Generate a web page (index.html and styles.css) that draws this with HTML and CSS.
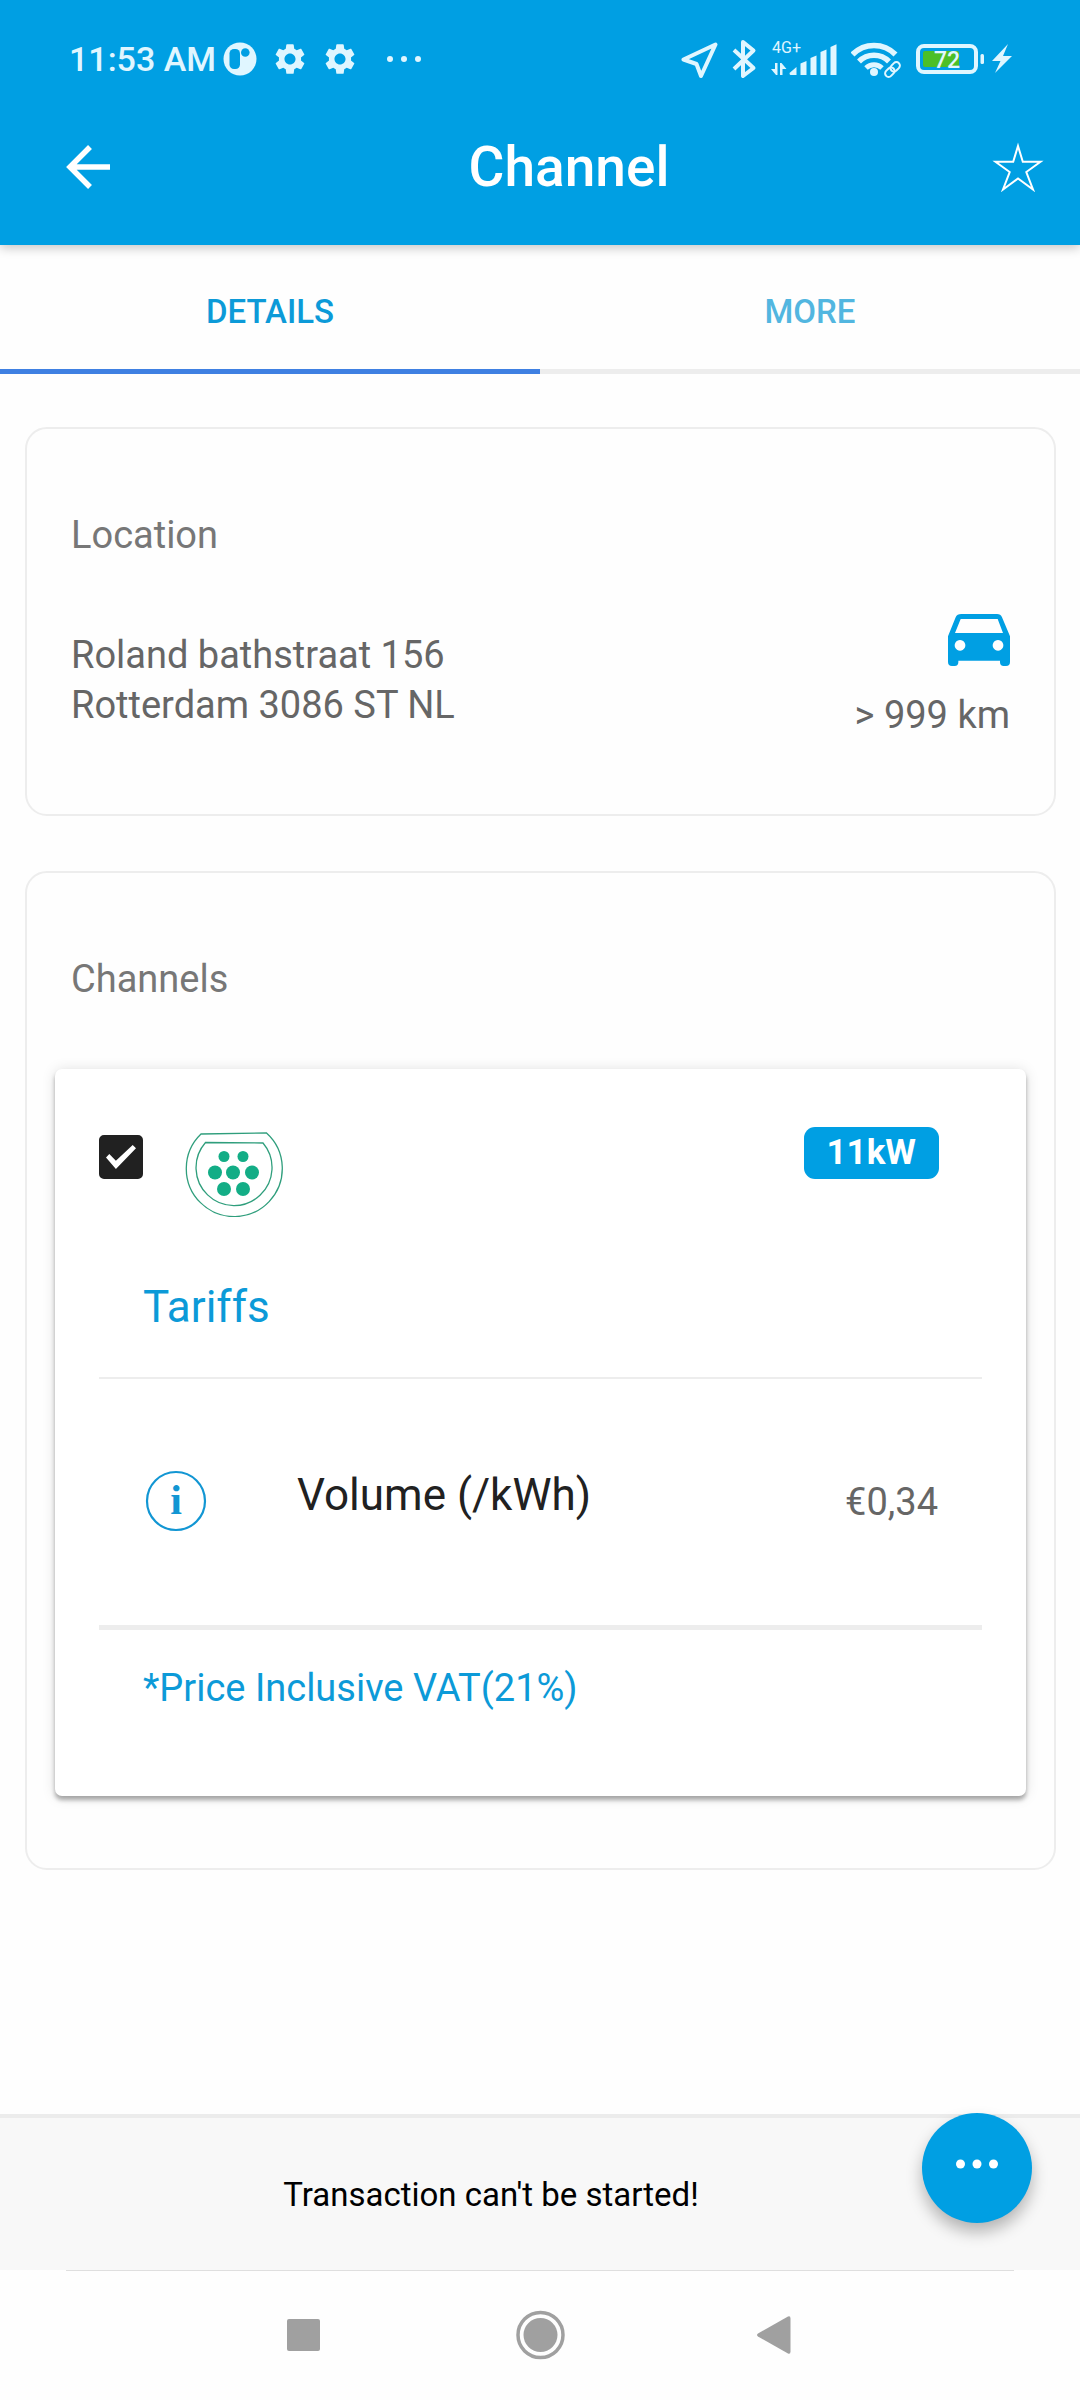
FILE: index.html
```html
<!DOCTYPE html>
<html lang="en">
<head>
<meta charset="utf-8">
<meta name="viewport" content="width=device-width, initial-scale=1">
<title>Channel</title>
<link rel="stylesheet" href="styles.css">
</head>
<body>
<header class="app-header">
  <div class="status-bar">
    <div class="status-left">
      <span class="clock">11:53 AM</span>
      <div class="status-notifications">
        <svg width="34" height="40" viewBox="0 0 34 40" aria-hidden="true">
          <circle class="tint" cx="17" cy="20" r="16.5"/>
          <rect class="cutout" x="6.5" y="10" width="10.5" height="20" rx="4.5"/>
          <circle class="cutout" cx="22.3" cy="13.5" r="4.3"/>
        </svg>
        <svg width="34" height="40" viewBox="0 0 34 40" aria-hidden="true">
          <use href="#gear"/>
        </svg>
        <svg width="34" height="40" viewBox="0 0 34 40" aria-hidden="true">
          <use href="#gear"/>
        </svg>
        <svg width="50" height="40" viewBox="0 0 50 40" aria-hidden="true">
          <g class="tint"><circle cx="17" cy="20" r="3"/><circle cx="31" cy="20" r="3"/><circle cx="45" cy="20" r="3"/></g>
        </svg>
      </div>
    </div>
    <div class="status-right">
      <svg width="38" height="40" viewBox="0 0 38 40" aria-hidden="true">
        <path class="tint-line" stroke-width="4" d="M34.5 5.5 20 37 15.5 25 2.5 20.5Z"/>
      </svg>
      <svg width="26" height="40" viewBox="0 0 26 40" aria-hidden="true">
        <path class="tint-line" stroke-width="4" d="M2 11 21.500 29 11 37V3L21.500 11.500 2 30"/>
      </svg>
      <svg class="glyph-text" width="67" height="40" viewBox="0 0 67 40" role="img" aria-label="4G+ signal">
        <text class="tint" x="1" y="14" font-size="16">4G+</text>
        <g class="tint">
          <path d="M4 24h2.500v12H5L0 30h4zM9 36V24h1.500l5 6h-4v6z"/>
          <path d="M18.500 34 25.500 28v8h-6q-1 0-1-2z"/>
          <path d="M29.500 24.500 35.500 22v14h-6zM39.500 19l6-2.500V36h-6zM49.500 13l6-2.500V36h-6zM59.500 8l6-2.800V36h-6z"/>
        </g>
      </svg>
      <svg width="52" height="40" viewBox="0 0 52 40" aria-hidden="true">
        <g class="tint-line" stroke-width="5.500" stroke-linecap="butt">
          <path d="M1.500 15.500a30 30 0 0 1 43 0"/>
          <path d="M8 22.500a21 21 0 0 1 30 0"/>
        </g>
        <path class="tint-line" stroke-width="5" d="M15 29a11.500 11.500 0 0 1 16 0"/>
        <circle class="tint" cx="23" cy="33" r="4"/>
        <g class="link-shape" transform="rotate(-45 41.500 30.500)">
          <rect x="32.500" y="27" width="10.500" height="7" rx="3.500"/>
          <rect x="40" y="27" width="10.500" height="7" rx="3.500"/>
        </g>
      </svg>
      <div class="battery">
        <svg class="glyph-text" width="69" height="40" viewBox="0 0 69 40" role="img" aria-label="Battery 72 percent">
          <rect class="tint-line" stroke-width="4" x="2" y="7" width="58" height="26" rx="6"/>
          <rect class="charge" x="7" y="12" width="36" height="16" rx="2"/>
          <rect class="tint" x="64.500" y="15" width="3.500" height="10" rx="1.500"/>
          <text class="tint" x="31" y="29" font-size="23" font-weight="500" text-anchor="middle">72</text>
        </svg>
        <svg width="20" height="40" viewBox="0 0 20 40" aria-hidden="true">
          <path class="tint" d="M16 5 0 22h8.500L3 34 20 17h-9z"/>
        </svg>
      </div>
    </div>
  </div>
  <div class="toolbar">
    <button class="icon-button" type="button" aria-label="Back">
      <svg width="44" height="44" viewBox="0 0 44 44" aria-hidden="true">
        <path fill="none" stroke="#fff" stroke-width="5.500" d="M44 22H5M24 2 4 22l20 20"/>
      </svg>
    </button>
    <h1 class="toolbar-title">Channel</h1>
    <button class="icon-button" type="button" aria-label="Add to favourites">
      <svg width="52" height="50" viewBox="0 0 52 50" aria-hidden="true">
        <path fill="none" stroke="#fff" stroke-width="2" d="M26 4 30.800 19.800H48.500L34.300 30 41 47.500 26 36.500 11 47.500 17.700 30 3.500 19.800H21.200Z"/>
      </svg>
    </button>
  </div>
</header>

<nav class="tabs" role="tablist">
  <button class="tab tab-active" type="button" role="tab" aria-selected="true">DETAILS</button>
  <button class="tab" type="button" role="tab" aria-selected="false">MORE</button>
</nav>

<main class="content">
  <section class="card">
    <h2 class="card-title">Location</h2>
    <div class="location">
      <address class="address">Roland bathstraat 156<br>Rotterdam 3086 ST NL</address>
      <div class="distance">
        <svg width="62" height="52" viewBox="0 0 186 156" aria-hidden="true">
          <path fill="#009fe3" fill-rule="evenodd" d="M40 0H147Q158 0 162 10L186 67V144Q186 156 174 156H167Q156 156 156 145V140H31V145Q31 156 20 156H12Q0 156 0 144V67L23 10Q27 0 40 0ZM38 15 21 57H165L149 15ZM36 78a16 16 0 1 0 .1 0ZM150 78a16 16 0 1 0 .1 0Z"/>
        </svg>
        <span>&gt; 999 km</span>
      </div>
    </div>
  </section>

  <section class="card card-channels">
    <h2 class="card-title">Channels</h2>
    <div class="channel">
      <div class="channel-head">
        <input class="channel-check" type="checkbox" checked aria-label="Select channel">
        <svg width="98" height="90" viewBox="0 0 98 90" role="img" aria-label="Type 2 connector">
          <g fill="none" stroke="#2f9e7c" stroke-width="1.300">
            <path d="M16 7 81.500 6A48 48 0 1 1 16 7Z"/>
            <path d="M20.500 15.500 78 16A38 38 0 1 1 20.500 15.500Z"/>
          </g>
          <g fill="#13ad86">
            <circle cx="39" cy="29.500" r="5.500"/><circle cx="58" cy="29.500" r="5.500"/>
            <circle cx="30" cy="45.500" r="7"/><circle cx="48" cy="45.500" r="7"/><circle cx="67" cy="45.500" r="7"/>
            <circle cx="39" cy="62" r="7"/><circle cx="58" cy="62" r="7"/>
          </g>
        </svg>
        <span class="power-badge">11kW</span>
      </div>
      <h3 class="tariffs-title">Tariffs</h3>
      <div class="tariff">
        <button class="info-button" type="button" aria-label="Tariff information">
          <svg width="64" height="64" viewBox="0 0 64 64" aria-hidden="true">
            <circle cx="32" cy="31" r="29" fill="none" stroke="#1296d3" stroke-width="2.200"/>
            <text class="info-letter" x="32" y="44" text-anchor="middle">i</text>
          </svg>
        </button>
        <span class="tariff-name">Volume (/kWh)</span>
        <span class="tariff-price">€0,34</span>
      </div>
      <p class="vat-note">*Price Inclusive VAT(21%)</p>
    </div>
  </section>
</main>

<footer class="bottom">
  <div class="message-bar">
    <p class="message" role="status">Transaction can't be started!</p>
    <button class="fab" type="button" aria-label="More actions">
      <svg width="42" height="10" viewBox="0 0 42 10" aria-hidden="true">
        <g fill="#fff"><circle cx="4.500" cy="5" r="4.500"/><circle cx="21" cy="5" r="4.500"/><circle cx="37.500" cy="5" r="4.500"/></g>
      </svg>
    </button>
  </div>
  <div class="system-nav">
    <button class="nav-button" type="button" aria-label="Recent apps">
      <svg width="50" height="50" viewBox="0 0 50 50" aria-hidden="true"><rect x="8" y="9" width="33" height="32" rx="2" fill="#a0a0a0"/></svg>
    </button>
    <button class="nav-button" type="button" aria-label="Home">
      <svg width="50" height="50" viewBox="0 0 50 50" aria-hidden="true"><circle cx="25.500" cy="25" r="17" fill="#a0a0a0"/><circle cx="25.500" cy="25" r="22.500" fill="none" stroke="#a0a0a0" stroke-width="3.500"/></svg>
    </button>
    <button class="nav-button" type="button" aria-label="Back to previous screen">
      <svg width="50" height="50" viewBox="0 0 50 50" aria-hidden="true"><path fill="#a0a0a0" d="M7 23.500 37 6.500Q39.500 5.500 39.500 8.500V41.500Q39.500 44.500 37 43.500L7 26.500Q5 25 7 23.500Z"/></svg>
    </button>
  </div>
</footer>

<svg class="symbols" width="0" height="0" aria-hidden="true">
  <symbol id="gear" viewBox="1 -1 22 26">
    <path fill="#e0f6ff" d="M19.140 12.940c.040-.300.060-.610.060-.940 0-.320-.020-.640-.070-.940l2.030-1.580c.180-.140.230-.410.120-.610l-1.920-3.320c-.120-.220-.370-.290-.590-.220l-2.390.960c-.500-.380-1.030-.700-1.620-.940l-.360-2.540c-.040-.240-.240-.410-.480-.410h-3.840c-.240 0-.430.170-.470.410l-.360 2.540c-.590.240-1.130.570-1.620.940l-2.390-.960c-.220-.080-.470 0-.590.220L2.740 8.870c-.120.210-.080.470.120.610l2.030 1.580c-.050.300-.090.630-.090.940s.020.640.070.940l-2.030 1.580c-.180.140-.230.410-.120.610l1.920 3.320c.120.220.370.290.590.220l2.390-.960c.500.380 1.030.700 1.620.940l.360 2.540c.050.240.240.410.480.410h3.840c.240 0 .440-.170.470-.410l.360-2.540c.590-.240 1.130-.560 1.620-.940l2.390.960c.220.080.470 0 .590-.220l1.920-3.320c.120-.220.070-.470-.120-.610l-2.010-1.580zM12 15.600c-1.980 0-3.600-1.620-3.600-3.600s1.620-3.600 3.600-3.600 3.600 1.620 3.600 3.600-1.620 3.600-3.600 3.600z"/>
  </symbol>
</svg>
</body>
</html>
```

FILE: styles.css
```css
:root {
  --brand: #009fe3;
  --brand-text: #0c9ad8;
  --tint: #e0f6ff;
  --line: #ededed;
  --text: #666;
}

* {
  box-sizing: border-box;
}

body {
  margin: 0;
  min-height: 100vh;
  display: flex;
  flex-direction: column;
  background: #fefefe;
  color: var(--text);
  font-family: Roboto, "Liberation Sans", sans-serif;
  font-size: 38px;
  line-height: 50px;
}

h1, h2, h3, p {
  margin: 0;
  font-weight: 400;
}

button {
  margin: 0;
  padding: 0;
  border: 0;
  background: none;
  color: inherit;
  font: inherit;
  cursor: pointer;
}

svg {
  display: block;
  flex: none;
}

.symbols {
  position: absolute;
}

/* Header */
.app-header {
  position: relative;
  z-index: 1;
  background: var(--brand);
  box-shadow: 0 3px 10px rgba(0, 0, 0, 0.22);
}

.status-bar {
  display: flex;
  justify-content: space-between;
  align-items: center;
  height: 88px;
  padding: 30px 68px 0 69px;
}

.status-left,
.status-right,
.status-notifications,
.battery {
  display: flex;
  align-items: center;
}

.status-left {
  gap: 7px;
}

.status-notifications {
  gap: 16px;
}

.status-right {
  gap: 13px;
}

.battery {
  gap: 7px;
}

.clock {
  color: var(--tint);
  font-size: 34px;
  font-weight: 500;
  line-height: 40px;
}

.tint {
  fill: var(--tint);
}

.tint-line {
  fill: none;
  stroke: var(--tint);
  stroke-linejoin: round;
}

.cutout {
  fill: var(--brand);
}

.charge {
  fill: #4cbf27;
}

.link-shape {
  fill: none;
  stroke: var(--tint);
  stroke-width: 2;
}

.glyph-text {
  font-family: Roboto, "Liberation Sans", sans-serif;
}

.toolbar {
  display: flex;
  align-items: center;
  height: 157px;
  padding: 0 30px 0 56px;
}

.icon-button {
  display: flex;
  flex: none;
  align-items: center;
  justify-content: center;
  width: 64px;
  height: 64px;
}

.toolbar-title {
  flex: 1;
  margin-left: 32px;
  color: #fff;
  font-size: 55px;
  font-weight: 500;
  line-height: 64px;
  text-align: center;
}

/* Tabs */
.tabs {
  display: flex;
}

.tab {
  flex: 1;
  height: 129px;
  padding-top: 10px;
  border-bottom: 5px solid var(--line);
  color: #52b6e0;
  font-size: 33px;
  font-weight: 500;
  line-height: 40px;
}

.tab-active {
  border-color: #3f80e2;
  color: var(--brand-text);
}

/* Cards */
.content {
  flex: 1;
  display: flex;
  flex-direction: column;
  gap: 55px;
  padding: 53px 24px 60px 25px;
}

.card {
  padding: 81px 44px 74px;
  border: 2px solid var(--line);
  border-radius: 22px;
}

.card-title {
  color: #777;
  font-size: 38px;
}

.location {
  display: flex;
  justify-content: space-between;
  align-items: flex-end;
  margin-top: 54px;
}

.address {
  padding-bottom: 10px;
  font-style: normal;
}

.distance {
  display: flex;
  flex-direction: column;
  align-items: flex-end;
  gap: 24px;
}

.card-channels {
  padding: 81px 28px 72px;
}

.card-channels .card-title {
  padding-left: 16px;
}

.channel {
  margin-top: 65px;
  padding: 58px 44px 83px;
  border-radius: 7px;
  background: #fff;
  box-shadow: 0 4px 4px rgba(0, 0, 0, 0.3), 0 1px 14px rgba(0, 0, 0, 0.13);
}

.channel-head {
  display: flex;
  align-items: flex-start;
  gap: 42px;
}

.channel-check {
  appearance: none;
  display: grid;
  place-items: center;
  width: 44px;
  height: 44px;
  margin: 8px 0 0;
  border: 2px solid #212121;
  border-radius: 5px;
}

.channel-check:checked {
  background: #212121;
}

.channel-check:checked::before {
  content: "";
  width: 30px;
  height: 24px;
  background: #fff;
  clip-path: polygon(0 52%, 11% 37%, 33% 66%, 89% 0, 100% 14%, 33% 100%);
}

.power-badge {
  margin-left: auto;
  margin-right: 43px;
  padding: 1px 23px;
  border-radius: 11px;
  background: var(--brand);
  color: #fff;
  font-size: 35px;
  font-weight: 700;
}

.tariffs-title {
  margin-top: 65px;
  padding: 0 44px 45px;
  border-bottom: 2px solid var(--line);
  color: var(--brand-text);
  font-size: 44px;
}

.tariff {
  display: flex;
  align-items: center;
  height: 251px;
  padding: 0 44px 0 45px;
  border-bottom: 5px solid var(--line);
}

.info-button {
  flex: none;
}

.info-letter {
  fill: #1296d3;
  font: 700 42px "Liberation Serif", serif;
}

.tariff-name {
  flex: 1;
  padding: 0 24px 14px 89px;
  color: #212121;
  font-size: 44px;
}

.vat-note {
  margin-top: 33px;
  padding: 0 44px;
  color: var(--brand-text);
}

/* Bottom */
.bottom {
  position: sticky;
  bottom: 0;
}

.message-bar {
  position: relative;
  display: flex;
  align-items: center;
  height: 156px;
  padding: 2px 98px 0 0;
  border-top: 4px solid #ececec;
  background: #f8f8f8;
}

.message {
  flex: 1;
  color: #000;
  font-size: 33px;
  text-align: center;
}

.fab {
  position: absolute;
  top: -5px;
  right: 48px;
  display: flex;
  align-items: center;
  justify-content: center;
  width: 110px;
  height: 110px;
  padding-bottom: 8px;
  border-radius: 50%;
  background: var(--brand);
  box-shadow: 0 9px 16px rgba(0, 0, 0, 0.28);
}

.system-nav {
  display: flex;
  align-items: center;
  justify-content: center;
  gap: 186px;
  height: 130px;
  background: #fefefe;
}

.system-nav::before {
  content: "";
  position: absolute;
  top: 156px;
  left: 66px;
  right: 66px;
  height: 1px;
  background: #dfdfdf;
}

.nav-button {
  flex: none;
}
```
